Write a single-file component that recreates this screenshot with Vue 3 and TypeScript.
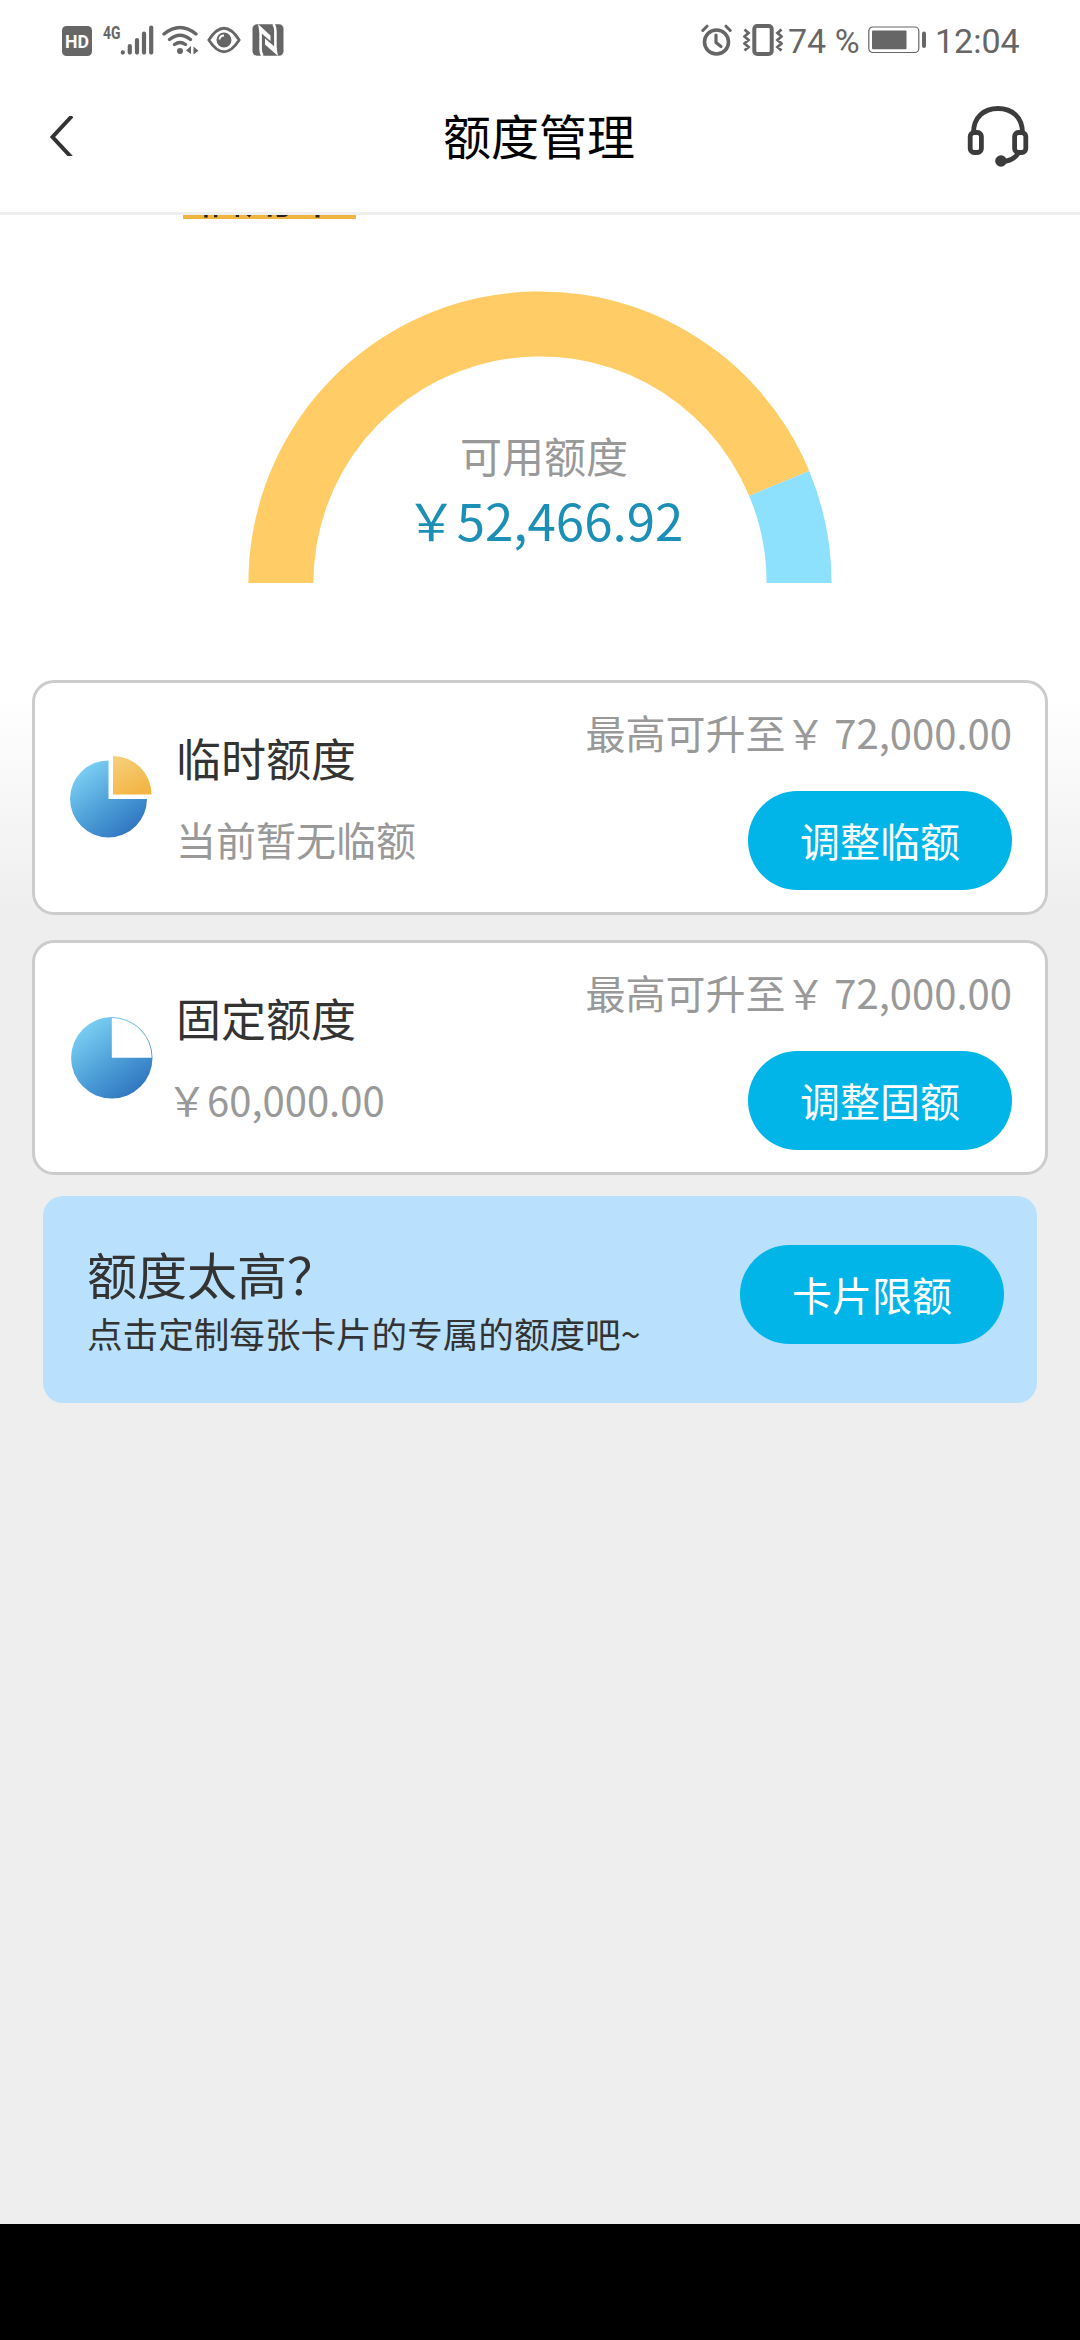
<script setup lang="ts">
interface QuotaCard {
  id: string
  title: string
  detail: string
  isAmount: boolean
  limit: string
  action: string
}

const available = 52466.92
const total = 60000

const cards: QuotaCard[] = [
  { id: 'temp', title: '临时额度', detail: '当前暂无临额', isAmount: false, limit: '最高可升至￥ 72,000.00', action: '调整临额' },
  { id: 'fixed', title: '固定额度', detail: '￥60,000.00', isAmount: true, limit: '最高可升至￥ 72,000.00', action: '调整固额' },
]

const outer = 291.6
const inner = 226.6

function ring(from: number, to: number): string {
  const point = (r: number, share: number) => {
    const a = Math.PI * (1 - share)
    return `${(292 + r * Math.cos(a)).toFixed(2)} ${(292 - r * Math.sin(a)).toFixed(2)}`
  }
  return `M${point(outer, from)} A${outer} ${outer} 0 0 1 ${point(outer, to)} L${point(inner, to)} A${inner} ${inner} 0 0 0 ${point(inner, from)}Z`
}

const availableArc = ring(0, available / total)
const usedArc = ring(available / total, 1)
</script>

<template>
  <div class="screen">
    <div class="status">
      <svg class="hd" width="30" height="30" viewBox="0 0 30 30">
        <rect width="30" height="30" rx="4.5" fill="#666" />
        <text x="15" y="21.6" text-anchor="middle" textLength="24" lengthAdjust="spacingAndGlyphs" class="hd-text">HD</text>
      </svg>
      <svg class="signal" width="51" height="36" viewBox="0 -4 51 36">
        <text x="0" y="15" textLength="17.5" lengthAdjust="spacingAndGlyphs" class="net-text">4G</text>
        <g stroke="#666" stroke-width="4.2" stroke-linecap="round">
          <path d="M19.8 28.4v.2M26.8 22v6.6M34 16v12.6M41 9.5v19.1M48.2 3.500v25.1" />
        </g>
      </svg>
      <svg class="wifi" width="38" height="32" viewBox="0 0 38 32">
        <g fill="none" stroke="#666" stroke-width="3.4" stroke-linecap="round">
          <path d="M2 10Q18 -3 34 10" />
          <path d="M7.500 15.500Q18 7 28.500 15.500" />
          <path d="M12.500 20.500Q18 16.500 23.500 20.500" />
        </g>
        <circle cx="18" cy="27" r="3" fill="#666" />
        <path d="M29 22v8l-5-3.600zM31.500 22.500v8l5-3.800z" fill="#666" />
      </svg>
      <svg class="eye" width="34" height="28" viewBox="0 0 34 28">
        <path d="M1.800 14Q17 -9.500 32.200 14Q17 37.500 1.800 14Z" fill="none" stroke="#666" stroke-width="2.8" stroke-linejoin="round" />
        <circle cx="17" cy="14" r="7.500" fill="#666" />
        <path d="M12.500 13.500a4.500 4.500 0 0 1 4.500-4" fill="none" stroke="#fff" stroke-width="1.800" />
      </svg>
      <svg class="nfc" width="32" height="32" viewBox="0 0 32 32">
        <rect x=".5" y=".3" width="31" height="31.400" rx="4.500" fill="#666" />
        <path d="M10.500 32Q8.600 29 8.600 25V6M23.400 26V7Q23.400 3 21.500 0" fill="none" stroke="#fff" stroke-width="2.600" />
        <path d="M6 0L18.500 11.500V17L7.300 7.500ZM26 32L13 20.500V14.500L24.700 24.500Z" fill="#fff" />
      </svg>

      <svg class="alarm" width="31" height="32" viewBox="0 0 31 32">
        <g fill="none" stroke="#666" stroke-linecap="round">
          <circle cx="15.500" cy="18" r="12" stroke-width="3.600" />
          <path d="M15 11v7.500l5 4" stroke-width="3.200" stroke-linejoin="round" />
          <path d="M1.800 6.500L6 2.200M29.200 6.500L25 2.200" stroke-width="3" />
        </g>
      </svg>
      <svg class="vibrate" width="40" height="32" viewBox="0 0 40 32">
        <g fill="none" stroke="#666">
          <rect x="11.300" y="2" width="17.400" height="28" rx="3" stroke-width="4" />
          <path d="M1.500 5.500l4 3.500-4 3.500 4 3.500-4 3.500 4 3.500-4 3.500M38.500 5.500l-4 3.500 4 3.500-4 3.500 4 3.500-4 3.500 4 3.500" stroke-width="2.800" />
        </g>
      </svg>
      <span class="status-text percent">74 %</span>
      <svg class="battery" width="59" height="28" viewBox="0 0 59 28">
        <rect x=".8" y="1" width="50" height="25.500" rx="4" fill="none" stroke="#666" stroke-width="1.200" />
        <rect x="4" y="4.500" width="34.500" height="18.800" rx="1" fill="#666" />
        <rect x="54" y="5.500" width="4" height="16.500" rx="2" fill="#666" />
      </svg>
      <span class="status-text clock">12:04</span>
    </div>

    <header class="nav">
      <svg class="back" width="24" height="40" viewBox="0 0 24 40">
        <path d="M23 0L3.500 21L23 42" fill="none" stroke="#333" stroke-width="4" />
      </svg>
      <h1>额度管理</h1>
      <svg class="service" width="62" height="62" viewBox="0 0 62 62">
        <g fill="none" stroke="#3c3c3c" stroke-width="4.800">
          <path d="M6.500 28C6.500 12 17 3.500 31 3.500S55.500 12 55.500 28" />
          <rect x="3.200" y="27.500" width="11.200" height="20" rx="4" />
          <rect x="47.600" y="27.500" width="11.200" height="20" rx="4" />
          <path d="M51.500 48Q46 56 35 56.500" />
        </g>
        <circle cx="34" cy="56" r="5.800" fill="#3c3c3c" />
      </svg>
    </header>

    <main class="content">
      <div class="tab-clip"><span class="tab">信用卡</span></div>

      <section class="gauge">
        <svg class="gauge-ring" width="584" height="292" viewBox="0 0 584 292">
          <path :d="availableArc" fill="#ffcc66" />
          <path :d="usedArc" fill="#8de1fd" />
        </svg>
        <div class="gauge-label">
          <span class="gauge-name">可用额度</span>
          <span class="gauge-value">￥52,466.92</span>
        </div>
      </section>

      <section v-for="card in cards" :key="card.id" class="card">
        <svg class="pie" width="86" height="85" viewBox="0 0 86 85">
          <defs>
            <linearGradient :id="'blue-' + card.id" x1=".15" y1=".1" x2=".8" y2=".95">
              <stop offset="0" stop-color="#7cd0f4" />
              <stop offset=".5" stop-color="#4fa2d9" />
              <stop offset="1" stop-color="#2f74c0" />
            </linearGradient>
            <linearGradient :id="'gold-' + card.id" x1=".1" y1="0" x2=".6" y2="1">
              <stop offset="0" stop-color="#f6d07c" />
              <stop offset="1" stop-color="#f3b544" />
            </linearGradient>
          </defs>
          <template v-if="card.id === 'temp'">
            <path d="M40.500 44V5.400A38.500 38.500 0 1 0 79 44Z" :fill="`url(#blue-${card.id})`" />
            <path d="M45 39.500V1A38.500 38.500 0 0 1 83.500 39.500Z" :fill="`url(#gold-${card.id})`" />
          </template>
          <template v-else>
            <circle cx="43.800" cy="42.800" r="40.700" :fill="`url(#blue-${card.id})`" />
            <path d="M43.800 42.800V2.900A39.900 39.900 0 0 1 83.700 42.800Z" fill="#fff" />
          </template>
        </svg>
        <div class="card-info">
          <h2>{{ card.title }}</h2>
          <p :class="{ amount: card.isAmount }">{{ card.detail }}</p>
        </div>
        <div class="card-side">
          <span class="limit">{{ card.limit }}</span>
          <button class="pill">{{ card.action }}</button>
        </div>
      </section>

      <section class="promo">
        <div class="promo-text">
          <h3>额度太高？</h3>
          <p>点击定制每张卡片的专属的额度吧~</p>
        </div>
        <button class="pill">卡片限额</button>
      </section>
    </main>
    <div class="system-bar"></div>
  </div>
</template>

<style>
body {
  margin: 0;
}
</style>

<style scoped>
.screen {
  width: 1080px;
  height: 2340px;
  display: flex;
  flex-direction: column;
  overflow: hidden;
  background: #eee;
  font-family: "Noto Sans CJK SC", sans-serif;
}
h1,
h2,
h3,
p {
  margin: 0;
  font-weight: 400;
}
svg {
  display: block;
  flex: none;
}
.status {
  height: 80px;
  flex: none;
  box-sizing: border-box;
  padding: 24px 0 0 62px;
  display: flex;
  align-items: flex-start;
  background: #fff;
}
.hd {
  margin-top: 2px;
}
.hd-text {
  font: 700 18px Roboto, sans-serif;
  fill: #fff;
}
.net-text {
  font: 700 19px Roboto, sans-serif;
  fill: #666;
}
.signal {
  margin: -4px 0 0 11px;
}
.wifi {
  margin-left: 8px;
}
.eye {
  margin: 2px 0 0 7px;
}
.nfc {
  margin-left: 11px;
}
.alarm {
  margin-left: auto;
}
.vibrate {
  margin-left: 11px;
}
.status-text {
  font: 400 34px/34px Roboto, sans-serif;
  color: #666;
  white-space: pre;
}
.percent {
  width: 72px;
  margin-left: 5px;
}
.battery {
  margin: 2px 0 0 8px;
}
.clock {
  width: 85px;
  margin: 0 60px 0 8px;
}
.nav {
  height: 135px;
  flex: none;
  box-sizing: border-box;
  padding: 0 51px 20px 49px;
  display: flex;
  align-items: center;
  justify-content: space-between;
  background: #fff;
  border-bottom: 3px solid #efefef;
}
.nav h1 {
  width: 192px;
  margin: 0 0 4px 38px;
  font-size: 48px;
  line-height: 60px;
  color: #000;
}
.content {
  flex: 1;
  display: flex;
  flex-direction: column;
  background: linear-gradient(#fff 0, #fff 480px, #eee 700px);
}
.tab-clip {
  height: 4px;
  flex: none;
  display: flex;
  align-items: flex-end;
  overflow: hidden;
}
.tab {
  margin-left: 183px;
  width: 173px;
  height: 54px;
  font-size: 49px;
  line-height: 54px;
  text-align: center;
  color: #222;
  background: #f0b440;
}
.gauge {
  display: grid;
  justify-items: center;
  margin-top: 72px;
  height: 292px;
  flex: none;
}
.gauge-ring,
.gauge-label {
  grid-area: 1 / 1;
}
.gauge-label {
  display: flex;
  flex-direction: column;
  align-items: center;
  padding-top: 134px;
}
.gauge-name {
  width: 168px;
  font-size: 42px;
  line-height: 60px;
  color: #999;
  margin-left: 8px;
}
.gauge-value {
  margin-left: 9px;
  font-size: 51px;
  line-height: 68px;
  color: #1b8fb5;
}
.card {
  box-sizing: border-box;
  height: 235px;
  flex: none;
  margin: 0 32px 25px;
  padding: 0 33px;
  border: 3px solid #ccc;
  border-radius: 22px;
  background: #fff;
  display: flex;
  align-items: center;
}
.gauge + .card {
  margin-top: 97px;
}
.card-info {
  margin-left: 22px;
  padding-top: 2px;
}
.card-info h2 {
  font-size: 45px;
  line-height: 60px;
  color: #333;
}
.card-info p {
  margin-top: 21px;
  font-size: 40px;
  line-height: 60px;
  color: #999;
}
.card-info .amount {
  margin-left: -9px;
}
.card-side {
  margin-left: auto;
  padding-bottom: 4px;
  display: flex;
  flex-direction: column;
  align-items: flex-end;
}
.limit {
  font-size: 40px;
  line-height: 60px;
  margin-bottom: 29px;
  color: #999;
  white-space: pre;
}
.pill {
  width: 264px;
  height: 99px;
  padding: 0 0 1px;
  border: 0;
  border-radius: 50px;
  background: #02b5e8;
  color: #fff;
  font: 400 40px/60px "Noto Sans CJK SC", sans-serif;
}
.promo {
  box-sizing: border-box;
  height: 207px;
  flex: none;
  margin: -4px 43px 0;
  padding: 0 33px 0 44px;
  border-radius: 20px;
  background: #b9e1fd;
  display: flex;
  align-items: center;
  justify-content: space-between;
  color: #333;
}
.promo-text {
  padding-top: 2px;
}
.promo h3 {
  font-size: 50px;
  line-height: 64px;
}
.promo p {
  font-size: 35.600px;
  line-height: 56px;
}
.promo .pill {
  margin-bottom: 11px;
}
.system-bar {
  height: 116px;
  flex: none;
  background: #000;
}
</style>
